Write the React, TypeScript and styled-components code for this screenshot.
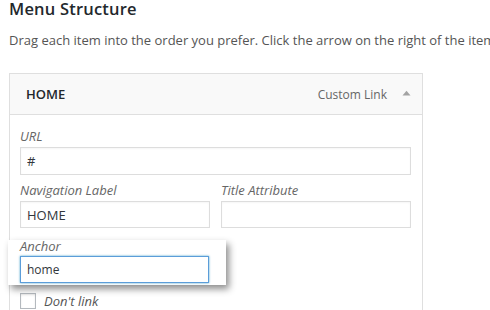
import styled, { createGlobalStyle } from "styled-components";

const GlobalStyle = createGlobalStyle`
  html, body {
    margin: 0;
    padding: 0;
    background: #fff;
    overflow: hidden;
  }
  body {
    font-family: "Open Sans", "Liberation Sans", sans-serif;
    color: #444;
  }
`;

function App() {
  return (
    <Page>
      <GlobalStyle />
      <Title>Menu Structure</Title>
      <Intro>
        Drag each item into the order you prefer. Click the arrow on the right
        of the item to reveal additional configuration options.
      </Intro>

      <Card>
        <CardHeader>
          <ItemTitle>HOME</ItemTitle>
          <ItemType>Custom Link</ItemType>
          <Toggle aria-label="collapse">
            <svg width="9" height="6" viewBox="0 0 9 6">
              <path d="M0.5 5.5 L4.5 0.8 L8.5 5.5 Z" fill="#a3a3a3" />
            </svg>
          </Toggle>
        </CardHeader>

        <CardBody>
          <Field>
            <Label>URL</Label>
            <Input $height={28} defaultValue="#" />
          </Field>

          <Row>
            <Field>
              <Label>Navigation Label</Label>
              <Input $height={27} defaultValue="HOME" />
            </Field>
            <Field>
              <Label>Title Attribute</Label>
              <Input $height={27} defaultValue="" />
            </Field>
          </Row>

          <AnchorBox>
            <Label $tight>Anchor</Label>
            <Input $height={27} $focused $size={12} defaultValue="home" autoFocus />
          </AnchorBox>

          <CheckRow>
            <CheckBox type="checkbox" />
            <CheckLabel>Don't link</CheckLabel>
          </CheckRow>
        </CardBody>
      </Card>
    </Page>
  );
}

export default App;

const Page = styled.div`
  width: 490px;
  height: 310px;
  padding-left: 9px;
  box-sizing: border-box;
  overflow: hidden;
`;

const Title = styled.h3`
  margin: 0;
  font-size: 16.5px;
  letter-spacing: 0.2px;
  line-height: 18px;
  font-weight: 600;
  color: #23282d;
`;

const Intro = styled.p`
  margin: 13px 0 0;
  font-size: 13px;
  line-height: 18px;
  color: #555;
  white-space: nowrap;
`;

const Card = styled.div`
  margin-top: 24px;
  width: 414px;
  box-sizing: border-box;
  border: 1px solid #dfdfdf;
  background: #fff;
`;

const CardHeader = styled.div`
  display: flex;
  align-items: center;
  height: 40px;
  padding: 0 11px 0 16px;
  background: #f9f9f9;
  border-bottom: 1px solid #dfdfdf;
`;

const ItemTitle = styled.span`
  flex: 1;
  font-size: 13px;
  font-weight: 600;
  color: #23282d;
`;

const ItemType = styled.span`
  font-size: 12px;
  color: #666;
`;

const Toggle = styled.span`
  display: flex;
  margin-left: 15px;
  width: 9px;
  height: 6px;
  margin-top: -2px;
`;

const CardBody = styled.div`
  padding: 14px 11px 40px 10px;
  display: flex;
  flex-direction: column;
`;

const Field = styled.label`
  display: flex;
  flex-direction: column;
  flex: 1;
`;

const Label = styled.span<{ $tight?: boolean }>`
  font-size: 13px;
  line-height: 15px;
  font-style: italic;
  color: #666;
  margin-top: ${(p) => (p.$tight ? "-1px" : "0")};
  margin-bottom: ${(p) => (p.$tight ? "2px" : "3px")};
`;

const Input = styled.input<{ $height: number; $focused?: boolean; $size?: number }>`
  box-sizing: border-box;
  width: 100%;
  height: ${(p) => p.$height}px;
  margin: 0;
  padding: 0 6px;
  font-family: "Open Sans", "Liberation Sans", sans-serif;
  font-size: ${(p) => p.$size ?? 13}px;
  color: #32373c;
  caret-color: #000;
  background: #fff;
  border: 1px solid ${(p) => (p.$focused ? "#5b9dd9" : "#ddd")};
  box-shadow: ${(p) =>
    p.$focused ? "0 0 2px rgba(30, 140, 190, 0.8)" : "inset 0 1px 2px rgba(0,0,0,0.04)"};
  outline: none;
  border-radius: 0;
`;

const Row = styled.div`
  display: flex;
  gap: 11px;
  margin-top: 8px;
`;

const AnchorBox = styled.label`
  display: flex;
  flex-direction: column;
  width: 218px;
  box-sizing: border-box;
  margin: 12px 0 0 -12px;
  padding: 0 17px 2px 12px;
  background: #fff;
  box-shadow: 3px 4px 7px rgba(0, 0, 0, 0.45);
  position: relative;
  z-index: 1;
`;

const CheckRow = styled.label`
  display: flex;
  align-items: center;
  gap: 8px;
  margin-top: 7px;
`;

const CheckBox = styled.input`
  appearance: none;
  margin: 0;
  width: 16px;
  height: 16px;
  border: 1px solid #b4b9be;
  background: #fff;
  box-shadow: inset 0 1px 2px rgba(0, 0, 0, 0.1);
`;

const CheckLabel = styled.span`
  font-size: 13px;
  line-height: 18px;
  font-style: italic;
  color: #555;
`;
